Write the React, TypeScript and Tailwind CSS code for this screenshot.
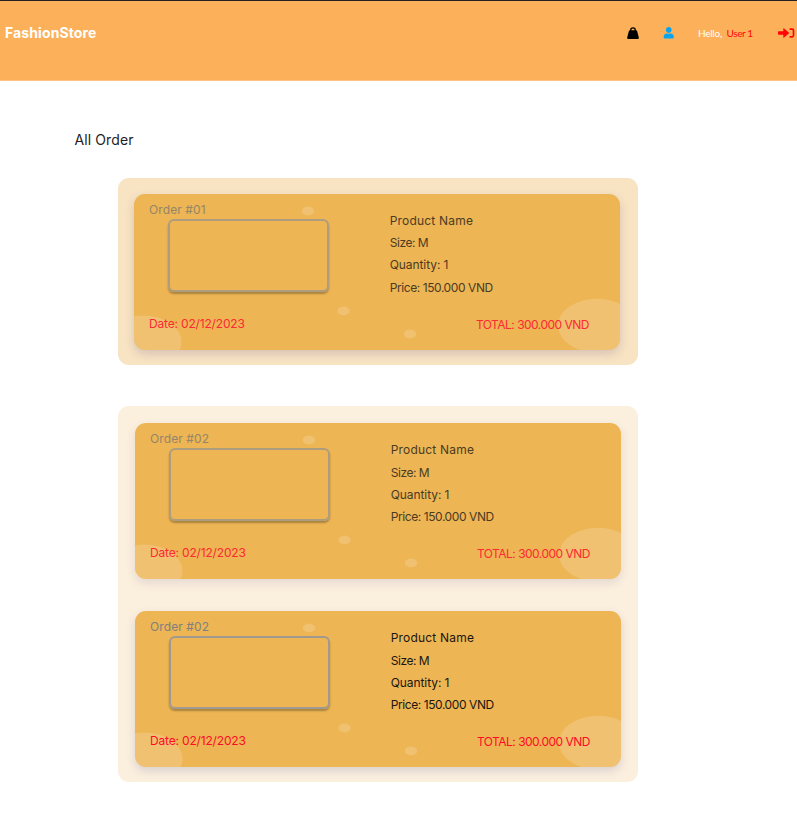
import React from "react";
import { FaUser } from "react-icons/fa";

type Tone = "soft" | "full";
type OrderProps = { title: string; tone: Tone; shadow: string };

const lines = [
  { text: "Product Name", tracking: "tracking-[0.2px]" },
  { text: "Size: M", tracking: "tracking-[-0.45px]" },
  { text: "Quantity: 1", tracking: "tracking-[-0.08px]" },
  { text: "Price: 150.000 VND", tracking: "tracking-[-0.42px]" },
];

function Bubbles() {
  return (
    <svg className="pointer-events-none absolute inset-0" width="486" height="156" fill="#fff" fillOpacity="0.17">
      <ellipse cx="174" cy="17" rx="6.2" ry="4.4" />
      <ellipse cx="209.5" cy="117" rx="6.2" ry="4.4" />
      <ellipse cx="276" cy="139.9" rx="6.2" ry="4.4" />
      <ellipse cx="262" cy="28.5" rx="6.2" ry="4.4" fillOpacity="0.06" />
      <ellipse cx="9" cy="147.7" rx="38.5" ry="26.2" />
      <ellipse cx="463" cy="131.7" rx="39" ry="27" />
    </svg>
  );
}

function OrderCard({ title, tone, shadow }: OrderProps) {
  const full = tone === "full";
  return (
    <article className={"relative h-[156px] w-[486px] rounded-[11px] bg-[#edb554] text-[12px] leading-[20px] " + shadow}>
      <div className="absolute inset-0 overflow-hidden rounded-[11px]">
        <Bubbles />
      </div>
      <div className="relative flex h-full flex-col whitespace-nowrap">
        <div className="flex">
          <div className="w-[255.7px] pl-[15px] pt-[6px]">
            <h2 className={"h-[19px] tracking-[0.1px] " + (full ? "text-[#808080]" : "text-[#958569]")}>{title}</h2>
            <div className={"ml-[19px] h-[73px] w-[161px] rounded-[6px] border-2 shadow-[0_2px_2px_rgba(0,0,0,0.28)] " + (full ? "border-[#a0998f]" : "border-[#ae9c7f]")} />
          </div>
          <div className={"flex flex-col gap-[2.2px] pt-[17px] " + (full ? "text-[#1c1610]" : "text-[#4b3b23]")}>
            {lines.map((line) => (
              <p key={line.text} className={line.tracking}>{line.text}</p>
            ))}
          </div>
        </div>
        <div className={"mt-auto flex items-start justify-between pb-[15px] pl-[15px] pr-[31px] " + (full ? "text-[#ff0b27]" : "text-[#fd2933]")}>
          <p className="tracking-[-0.17px]">Date: 02/12/2023</p>
          <p className="mt-px tracking-[-0.51px]">TOTAL: 300.000 VND</p>
        </div>
      </div>
    </article>
  );
}

export default function App() {
  return (
    <div className="h-[831px] w-[797px] overflow-hidden bg-white font-['Inter',sans-serif]">
      <header className="flex h-[81px] items-start border-b border-t border-b-[#fdc383] border-t-[#242124] bg-[#fdb05a] pl-[5px] pt-[22px]">
        <div className="text-[14px] font-bold leading-[20px] tracking-[0.1px] text-white">FashionStore</div>
        <div className="ml-auto flex items-start">
          <svg width="12" height="13" viewBox="0 0 12 13" className="mt-[3.5px]">
            <path d="M3.7 4V3.2a2.3 2.3 0 0 1 4.6 0V4" fill="none" stroke="#000" strokeWidth="1.3" />
            <path d="M3 3.3h6q.9 0 1.2.9l1.6 6.4q.3 1.4-1.1 1.4H1.3Q-.1 12 .2 10.6l1.6-6.4q.3-.9 1.2-.9Z" />
          </svg>
          <FaUser size={11.5} className="ml-[24px] mt-[4px] text-[#08a5ef]" />
          <div className="ml-[24px] flex w-[55px] gap-[5px] whitespace-nowrap font-['Lato',sans-serif] text-[10px] leading-[20px]">
            <span className="w-[23.5px] tracking-[-0.25px] text-white">Hello,</span>
            <span className="tracking-[-0.4px] text-[#ff0808]">User 1</span>
          </div>
          <svg width="17" height="12" viewBox="0 0 17 12" className="ml-[25px] mr-[2px] mt-[4px] text-[#ff0505]">
            <path d="M.8 4.2h4.5V1.7q0-.9.8-.3l4.7 4.1q.5.5 0 1l-4.7 4.1q-.8.6-.8-.3V7.8H.8Q0 7.8 0 7V5q0-.8.8-.8Z" fill="currentColor" />
            <path d="M11.6 2.2h2.6q1.3 0 1.3 1.3v5q0 1.3-1.3 1.3h-2.6" fill="none" stroke="currentColor" strokeWidth="1.7" />
          </svg>
        </div>
      </header>
      <main className="pt-[49px]">
        <h1 className="ml-[74.5px] text-[14px] leading-[20px] tracking-[0.1px] text-[#242124]">All Order</h1>
        <section className="ml-[118px] mt-[28px] h-[187px] w-[520px] rounded-[11px] bg-[#f8e3c3] pl-[16px] pt-[16px]">
          <OrderCard title="Order #01" tone="soft" shadow="shadow-[0_4px_10px_rgba(95,80,130,0.22)]" />
        </section>
        <section className="ml-[118px] mt-[41px] flex h-[376px] w-[520px] flex-col gap-[32px] rounded-[11px] bg-[#fbefde] pl-[17px] pt-[17.4px]">
          <OrderCard title="Order #02" tone="soft" shadow="shadow-[0_4px_10px_rgba(95,80,130,0.14)]" />
          <OrderCard title="Order #02" tone="full" shadow="shadow-[0_4px_10px_rgba(80,80,150,0.18)]" />
        </section>
      </main>
    </div>
  );
}
